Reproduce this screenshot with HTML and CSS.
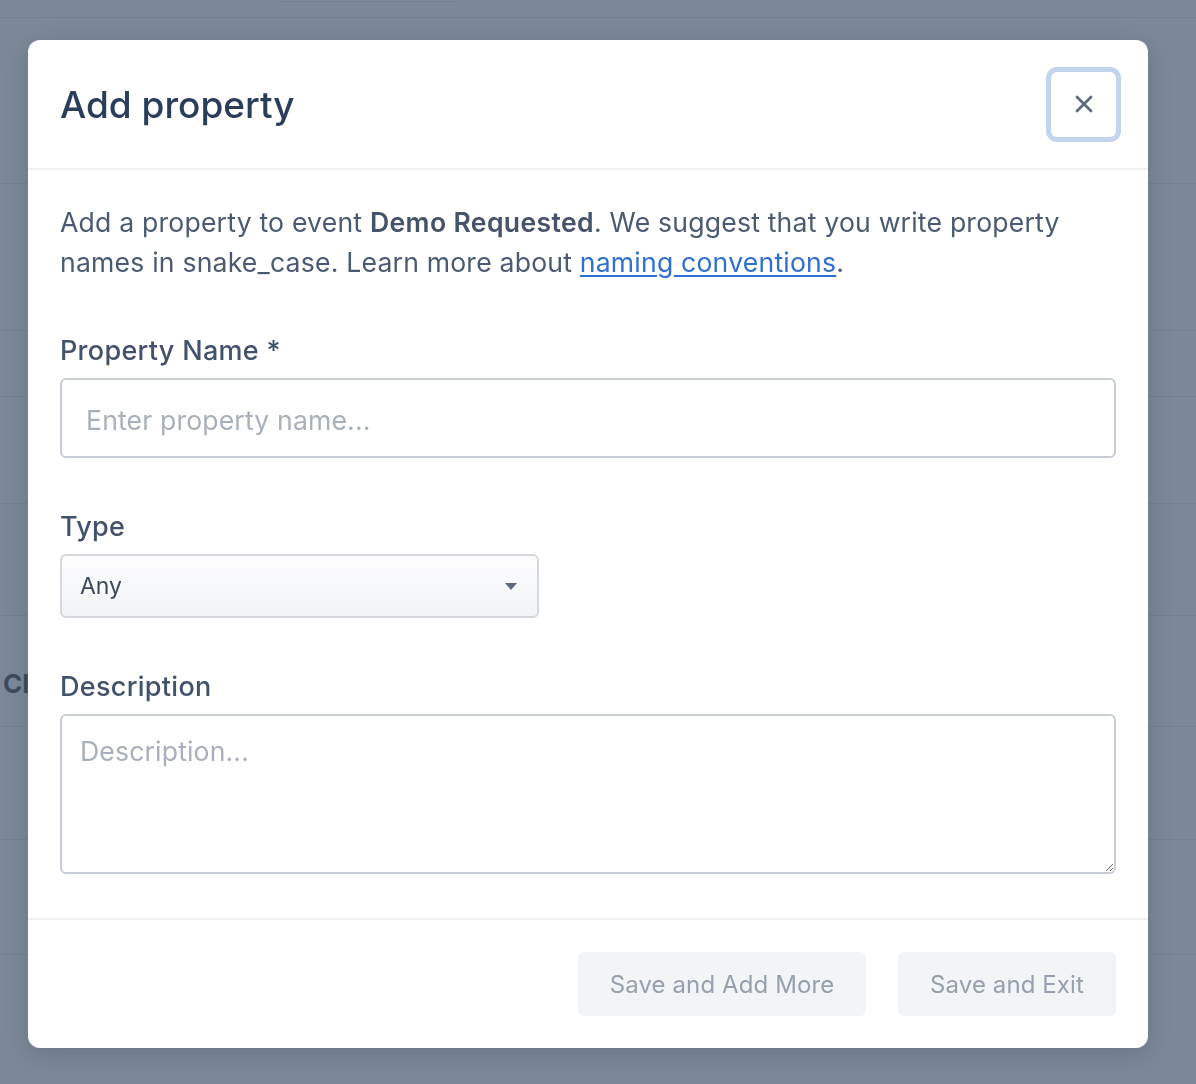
FILE: index.html
```html
<!DOCTYPE html>
<html lang="en">
<head>
<meta charset="utf-8">
<title>Add property</title>
<link rel="stylesheet" href="styles.css">
</head>
<body>
<div class="backdrop">
  <div class="bg-row bg-r0"><div class="bg-search"></div></div>
  <div class="bg-row bg-r1"></div>
  <div class="bg-row bg-r2"></div>
  <div class="bg-row bg-r3"></div>
  <div class="bg-row bg-r4"></div>
  <div class="bg-row bg-r5"></div>
  <div class="bg-row bg-r6"><span class="bg-text">Clicks</span></div>
  <div class="bg-row bg-r7"></div>
  <div class="bg-row bg-r8"></div>
  <div class="bg-row bg-r9"></div>
</div>

<div class="overlay">
  <div class="modal">
    <div class="modal-header">
      <h1 class="modal-title">Add property</h1>
      <button class="close-btn" type="button" aria-label="Close">
        <svg width="18" height="18" viewBox="0 0 18 18" aria-hidden="true">
          <path d="M2 2 L16 16 M16 2 L2 16" stroke="#5e6b7d" stroke-width="2.8" stroke-linecap="round" fill="none"/>
        </svg>
      </button>
    </div>
    <div class="modal-body">
      <p class="intro">Add a property to event <strong>Demo Requested</strong>. We suggest that you write property names in snake_case. Learn more about <a href="#" class="link">naming conventions</a>.</p>

      <div class="field">
        <label class="label">Property Name *</label>
        <input class="input" type="text" placeholder="Enter property name...">
      </div>

      <div class="field field-type">
        <label class="label">Type</label>
        <div class="select">
          <span class="select-value">Any</span>
          <svg class="select-arrow" width="12" height="7" viewBox="0 0 12 7" aria-hidden="true">
            <path d="M0 0 L12 0 L6 7 Z" fill="#5e6b7d"/>
          </svg>
        </div>
      </div>

      <div class="field field-last">
        <label class="label">Description</label>
        <textarea class="textarea" placeholder="Description..."></textarea>
      </div>
    </div>
    <div class="modal-footer">
      <button class="btn btn-more" type="button">Save and Add More</button>
      <button class="btn btn-exit" type="button">Save and Exit</button>
    </div>
  </div>
</div>
</body>
</html>
```

FILE: styles.css
```css
* { box-sizing: border-box; }

html, body {
  margin: 0;
  padding: 0;
  height: 100%;
}

body {
  background: #7c8898;
  font-family: Inter, "Noto Sans", "Liberation Sans", sans-serif;
  overflow: hidden;
}

/* background page (dimmed) */
.backdrop {
  display: flex;
  flex-direction: column;
}

.bg-row {
  border-bottom: 1px solid #728093;
  flex: none;
}
.bg-r0 { height: 18px; padding-left: 277px; }
.bg-r1 { height: 166px; }
.bg-r2 { height: 147px; }
.bg-r3 { height: 66px; }
.bg-r4 { height: 107px; }
.bg-r5 { height: 112px; background: #7a8797; }
.bg-r6 { height: 111px; padding: 52px 0 0 3px; }
.bg-r7 { height: 113px; }
.bg-r8 { height: 115px; }
.bg-r9 { height: 130px; border-bottom: 0; }

.bg-search {
  width: 183px;
  height: 1px;
  border-radius: 0 0 6px 6px;
  box-shadow: 0 1px 0 #758294;
}

.bg-text {
  font-size: 26px;
  font-weight: 700;
  color: #3e4b5e;
  line-height: 32px;
}

/* overlay + modal */
.overlay {
  position: fixed;
  inset: 0;
  padding: 40px 0 0 28px;
}

.modal {
  width: 1120px;
  height: 1008px;
  background: #ffffff;
  border-radius: 12px;
  display: flex;
  flex-direction: column;
  box-shadow: 0 6px 24px rgba(30, 40, 60, 0.18);
}

.modal-header {
  height: 130px;
  flex: none;
  display: flex;
  align-items: center;
  justify-content: space-between;
  padding: 0 32px 0 32px;
  border-bottom: 2px solid #eef0f2;
}

.modal-title {
  margin: 0;
  font-size: 37px;
  font-weight: 500;
  color: #2a3e5b;
  letter-spacing: 0;
  padding-top: 1px;
}

.close-btn {
  width: 65px;
  height: 65px;
  border: 0;
  border-radius: 6px;
  background: #ffffff;
  box-shadow: 0 0 0 5px #c3d4ec;
  display: flex;
  align-items: center;
  justify-content: center;
  padding: 0;
  cursor: pointer;
}

.modal-body {
  flex: 1;
  padding: 32px 32px 0 32px;
}

.intro {
  margin: 0 0 52px 0;
  font-size: 26.6px;
  line-height: 40px;
  color: #4a5b71;
  letter-spacing: 0.2px;
}

.intro strong {
  font-weight: 600;
  color: #45546a;
  letter-spacing: 0.35px;
}

.link {
  color: #2f6fd2;
  text-decoration: underline;
  text-underline-offset: 3px;
}

.field {
  display: flex;
  flex-direction: column;
  margin-bottom: 52px;
}
.field-type { margin-bottom: 52px; }
.field-last { margin-bottom: 0; }

.label {
  font-size: 27px;
  line-height: 34px;
  font-weight: 500;
  color: #42526a;
  margin-bottom: 10px;
  letter-spacing: 0.3px;
}

.input {
  width: 1056px;
  height: 80px;
  border: 2px solid #c8ced6;
  border-radius: 6px;
  padding: 4px 24px 0;
  font-family: inherit;
  font-size: 26.6px;
  color: #3d4a5c;
  background: #ffffff;
  outline: none;
}

.input::placeholder,
.textarea::placeholder {
  color: #a8b0bb;
  letter-spacing: 0.15px;
}

.select {
  width: 479px;
  height: 64px;
  border: 2px solid #d5d9df;
  border-radius: 6px;
  background: linear-gradient(#fdfdfe, #f1f3f5);
  display: flex;
  align-items: center;
  justify-content: space-between;
  padding: 0 20px 0 18px;
}

.select-value {
  font-size: 23px;
  color: #3b485a;
}

.textarea {
  display: block;
  width: 1056px;
  height: 160px;
  border: 2px solid #c8ced6;
  border-radius: 6px;
  padding: 18px 18px;
  font-family: inherit;
  font-size: 26.6px;
  line-height: 34px;
  color: #3d4a5c;
  resize: both;
  outline: none;
}

.modal-footer {
  flex: none;
  border-top: 2px solid #eef0f2;
  padding: 32px 32px 32px 0;
  display: flex;
  justify-content: flex-end;
  gap: 32px;
}

.btn {
  height: 64px;
  border: 0;
  border-radius: 6px;
  background: #f3f4f6;
  color: #97a1ad;
  font-family: inherit;
  font-size: 24px;
  letter-spacing: 0.1px;
}
.btn-more { width: 288px; }
.btn-exit { width: 218px; }
```
